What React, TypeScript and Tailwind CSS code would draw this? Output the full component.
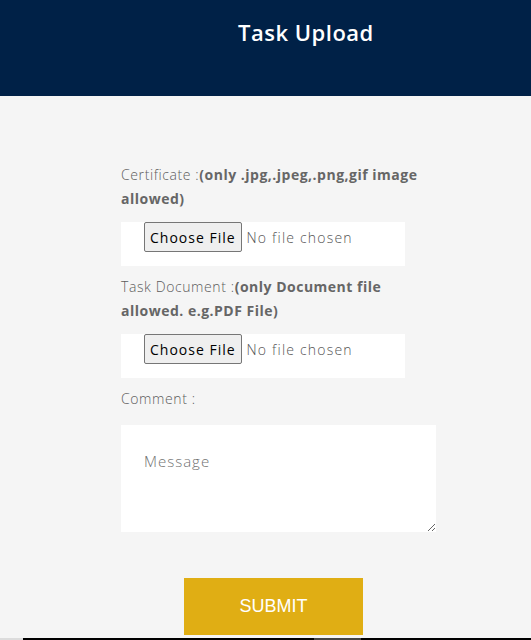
import React from "react";

export default function App() {
  const font = { fontFamily: '"Open Sans", "Noto Sans", sans-serif' };
  const fileCls =
    "text-[14px] tracking-[1.2px] font-light text-[#555] file:mr-[5px] file:h-[30px] file:px-[5px] file:border file:border-solid file:border-[#767676] file:bg-[#efefef] file:rounded-[2px] file:text-black file:font-normal file:text-[14px] file:tracking-[1px]";
  return (
    <div className="w-[531px] min-h-[640px] bg-[#f5f5f5] overflow-hidden" style={font}>
      <header className="h-[96px] bg-[#002147] flex items-start">
        <h1 className="ml-[238px] mt-[16px] text-[22px] leading-[32px] font-semibold tracking-[0.5px] text-white">
          Task Upload
        </h1>
      </header>

      <main className="ml-[121px] w-[315px] pt-[67px] text-[14px] text-[#5c5c5c]">
        <label className="block leading-[24px] font-light tracking-[0.6px]">
          Certificate :<span className="font-bold tracking-[0.5px] text-[#666]">(only .jpg,.jpeg,.png,gif image allowed)</span>
        </label>
        <div className="mt-[11px] w-[284px] h-[44px] bg-white pl-[23px]">
          <input type="file" className={fileCls} />
        </div>

        <label className="block mt-[9px] leading-[24px] font-light tracking-[0.6px]">
          Task Document :<span className="font-bold tracking-[0.5px] text-[#666]">(only Document file allowed. e.g.PDF File)</span>
        </label>
        <div className="mt-[11px] w-[284px] h-[44px] bg-white pl-[23px]">
          <input type="file" className={fileCls} />
        </div>

        <label className="block mt-[9px] leading-[24px] font-light tracking-[0.6px]">Comment :</label>
        <textarea
          placeholder="Message"
          className="block mt-[14px] w-[315px] h-[107px] bg-white px-[23px] pt-[25px] text-[15px] font-light tracking-[1px] outline-none placeholder:text-[#707070]"
        />

        <button
          className="block mt-[46px] ml-[63px] w-[179px] h-[57px] bg-[#e0ae14] text-white text-[18px] uppercase"
          style={{ fontFamily: '"Liberation Sans", Arial, sans-serif' }}
        >
          Submit
        </button>
      </main>

      <div className="mt-[3px] h-[2px] flex">
        <div className="w-[23px] bg-[#dcdcdc]" />
        <div className="w-[291px] bg-black" />
        <div className="w-[47px] bg-[#444]" />
        <div className="flex-1 bg-black" />
      </div>
    </div>
  );
}
